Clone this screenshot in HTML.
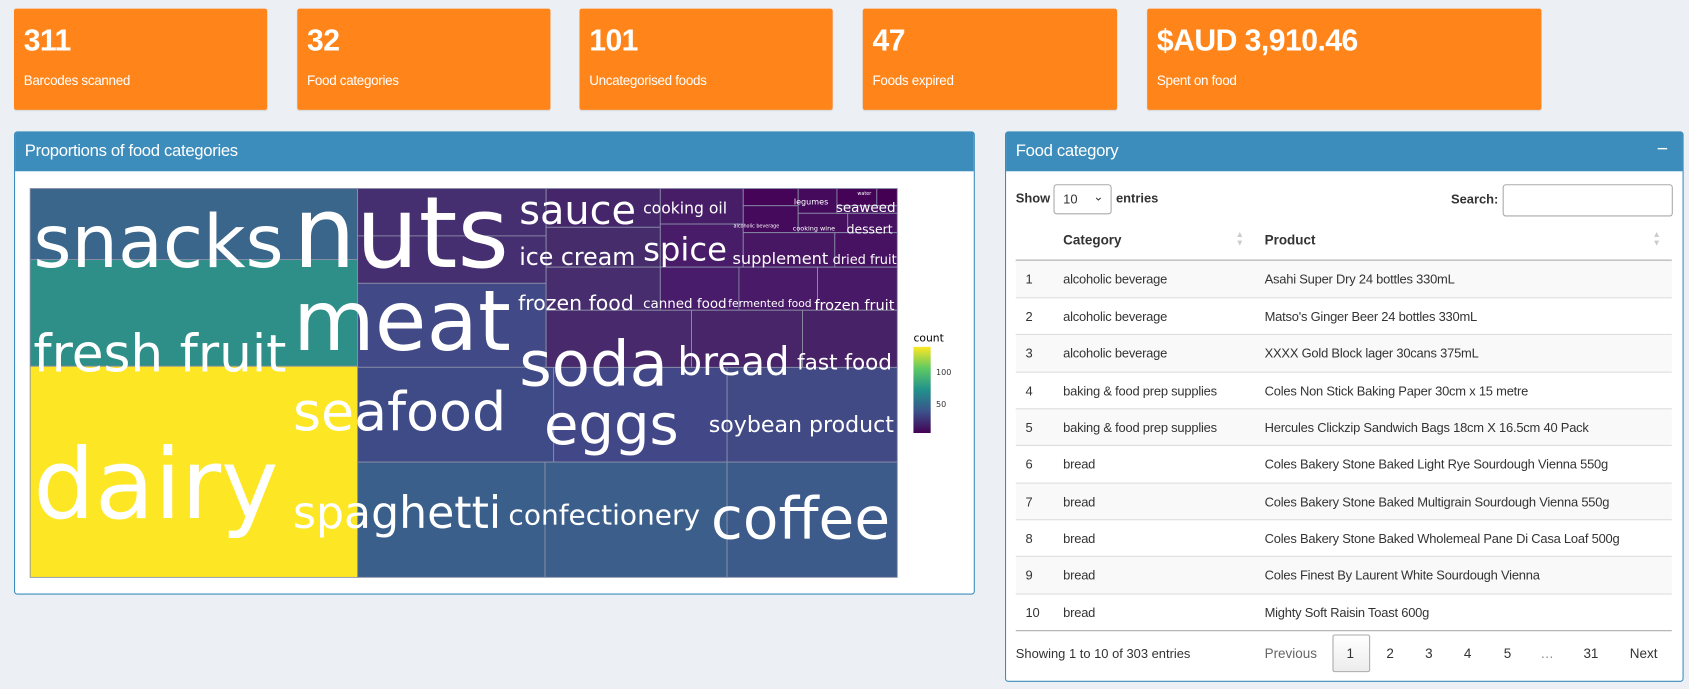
<!DOCTYPE html>
<html><head><meta charset="utf-8">
<style>
html,body{margin:0;padding:0;background:#ecf0f5;width:1689px;height:689px;overflow:hidden}
#w{position:absolute;left:0;top:0;width:1568px;height:640px;transform:scale(1.07717);transform-origin:0 0;font-family:"Liberation Sans",sans-serif;color:#333}
.a{position:absolute}
.vb{position:absolute;top:8px;height:94px;background:#ff851b;color:#fff;border-radius:2px;box-shadow:0 1px 1px rgba(0,0,0,.1)}
.vb b{position:absolute;left:9px;top:14px;font-size:28px;font-weight:bold;letter-spacing:-0.5px}
.vb span{position:absolute;left:9px;top:60px;font-size:12.5px;letter-spacing:-0.3px}
.box{position:absolute;background:#fff;border:1px solid #3c8dbc;border-radius:3px}
.hd{position:absolute;left:0;top:0;right:0;height:36px;background:#3c8dbc;color:#fff;font-size:15.5px;letter-spacing:-0.3px}
.hd span{position:absolute;left:9px;top:9px}
.row{position:absolute;left:943px;width:609px;height:34px;border-top:1px solid #ddd;font-size:12px;letter-spacing:-0.2px}
.row span{position:absolute;top:10px}
.pg{position:absolute;top:600px;font-size:12.5px;color:#333}
</style></head><body><div id="w">
<div class="vb" style="left:13px;width:235px"><b>311</b><span>Barcodes scanned</span></div>
<div class="vb" style="left:276px;width:235px"><b>32</b><span>Food categories</span></div>
<div class="vb" style="left:538px;width:235px"><b>101</b><span>Uncategorised foods</span></div>
<div class="vb" style="left:801px;width:236px"><b>47</b><span>Foods expired</span></div>
<div class="vb" style="left:1065px;width:366px"><b>$AUD 3,910.46</b><span>Spent on food</span></div>

<div class="box" style="left:13px;top:122px;width:890px;height:428px"><div class="hd"><span>Proportions of food categories</span></div></div>

<svg class="a" style="left:0;top:0" width="1568" height="640" viewBox="0 0 1568 640" font-family="DejaVu Sans, sans-serif" fill="#fff">
<g stroke="#8a8fa8" stroke-width="0.8">
<rect x="28" y="175" width="304" height="66" fill="#3a668b"/>
<rect x="28" y="241" width="304" height="99" fill="#2e8f89"/>
<rect x="28" y="340" width="304" height="196" fill="#fde724"/>
<rect x="332" y="175" width="175" height="44" fill="#462f70"/>
<rect x="332" y="219" width="175" height="44" fill="#462f70"/>
<rect x="332" y="263" width="175" height="78" fill="#414a86"/>
<rect x="332" y="341" width="182" height="88" fill="#3f4b87"/>
<rect x="514" y="341" width="161" height="88" fill="#424787"/>
<rect x="675" y="341" width="158" height="88" fill="#424a86"/>
<rect x="332" y="429" width="174" height="107" fill="#3b5f8b"/>
<rect x="506" y="429" width="169" height="107" fill="#3b5e8b"/>
<rect x="675" y="429" width="158" height="107" fill="#3c5a8a"/>
<rect x="507" y="175" width="106" height="36" fill="#46266b"/>
<rect x="507" y="211" width="106" height="37" fill="#472c6c"/>
<rect x="507" y="248" width="106" height="40" fill="#472d6d"/>
<rect x="613" y="175" width="77" height="33" fill="#471d67"/>
<rect x="613" y="208" width="77" height="40" fill="#481c68"/>
<rect x="690" y="175" width="51" height="16" fill="#450457"/>
<rect x="690" y="191" width="51" height="25" fill="#450a5c"/>
<rect x="741" y="175" width="36" height="23" fill="#450a5c"/>
<rect x="741" y="198" width="46" height="18" fill="#46105f"/>
<rect x="777" y="175" width="37" height="16" fill="#440356"/>
<rect x="814" y="175" width="19" height="16" fill="#440154"/>
<rect x="777" y="191" width="56" height="7" fill="#46105f"/>
<rect x="787" y="198" width="46" height="18" fill="#461261"/>
<rect x="690" y="216" width="85" height="32" fill="#471763"/>
<rect x="775" y="216" width="58" height="32" fill="#461261"/>
<rect x="613" y="248" width="73" height="40" fill="#481c6a"/>
<rect x="686" y="248" width="73" height="40" fill="#481a68"/>
<rect x="759" y="248" width="74" height="40" fill="#481966"/>
<rect x="507" y="288" width="135" height="53" fill="#482a6c"/>
<rect x="642" y="288" width="103" height="53" fill="#482568"/>
<rect x="745" y="288" width="88" height="53" fill="#482266"/>
</g>
<text x="31" y="248" font-size="68">snacks</text>
<text x="272" y="248" font-size="92">nuts</text>
<text x="31" y="345" font-size="48">fresh fruit</text>
<text x="272" y="325" font-size="78">meat</text>
<text x="31" y="481" font-size="90">dairy</text>
<text x="272" y="399" font-size="50">seafood</text>
<text x="272" y="490" font-size="41">spaghetti</text>
<text x="472" y="487" font-size="26">confectionery</text>
<text x="660" y="500" font-size="54">coffee</text>
<text x="482" y="358" font-size="58">soda</text>
<text x="505" y="412" font-size="52">eggs</text>
<text x="629" y="348" font-size="36">bread</text>
<text x="740" y="343" font-size="20">fast food</text>
<text x="658" y="401" font-size="20.5">soybean product</text>
<text x="482" y="208" font-size="37">sauce</text>
<text x="482" y="246" font-size="22">ice cream</text>
<text x="597" y="242" font-size="30">spice</text>
<text x="597" y="198" font-size="14.5">cooking oil</text>
<text x="680" y="245" font-size="15">supplement</text>
<text x="773" y="245" font-size="12">dried fruit</text>
<text x="481" y="288" font-size="19">frozen food</text>
<text x="597" y="286" font-size="12.5">canned food</text>
<text x="676" y="285" font-size="10">fermented food</text>
<text x="756" y="288" font-size="13.5">frozen fruit</text>
<text x="776" y="197" font-size="12.5">seaweed</text>
<text x="786" y="217" font-size="11.5">dessert</text>
<text x="737" y="190" font-size="7.5">legumes</text>
<text x="736" y="214" font-size="6">cooking wine</text>
<text x="681" y="211" font-size="4.5">alcoholic beverage</text>
<text x="796" y="181" font-size="4.5">water</text>
<defs><linearGradient id="g" x1="0" y1="0" x2="0" y2="1"><stop offset="0" stop-color="#fde725"/><stop offset=".25" stop-color="#5ec962"/><stop offset=".5" stop-color="#21918c"/><stop offset=".75" stop-color="#3b528b"/><stop offset="1" stop-color="#440154"/></linearGradient></defs>
<text x="848" y="317" font-size="10" fill="#000">count</text>
<rect x="848" y="322" width="16" height="80" fill="url(#g)"/>
<text x="869" y="348" font-size="7.5" fill="#333">100</text>
<text x="869" y="378" font-size="7.5" fill="#333">50</text>
</svg>

<div class="box" style="left:933px;top:122px;width:628px;height:509px"><div class="hd"><span>Food category</span><span style="left:604px;top:5px;font-size:18px">−</span></div></div>
<div class="a" style="left:943px;top:177px;font-size:12px;font-weight:bold">Show</div>
<div class="a" style="left:978px;top:171px;width:52px;height:26px;border:1px solid #aaa;border-radius:3px;background:#fff;font-size:12px"><span class="a" style="left:8px;top:6px">10</span><span class="a" style="left:36px;top:4px;font-size:11px">&#8964;</span></div>
<div class="a" style="left:1036px;top:177px;font-size:12px;font-weight:bold">entries</div>
<div class="a" style="left:1347px;top:178px;font-size:12px;font-weight:bold">Search:</div>
<div class="a" style="left:1395px;top:171px;width:156px;height:28px;border:1px solid #aaa;border-radius:3px;background:#fff"></div>
<div class="a" style="left:987px;top:216px;font-size:12.5px;font-weight:bold">Category</div>
<div class="a" style="left:1174px;top:216px;font-size:12.5px;font-weight:bold">Product</div>
<div class="a" style="left:1147px;top:214px;font-size:8px;color:#ccc;line-height:8px">▲<br>▼</div>
<div class="a" style="left:1534px;top:214px;font-size:8px;color:#ccc;line-height:8px">▲<br>▼</div>
<div class="a" style="left:943px;top:241px;width:609px;border-top:2px solid #aaa"></div>
<div class="row" style="top:242px;background:#f9f9f9;border-top:none"><span style="left:9px">1</span><span style="left:44px">alcoholic beverage</span><span style="left:231px">Asahi Super Dry 24 bottles 330mL</span></div>
<div class="row" style="top:276px"><span style="left:9px">2</span><span style="left:44px">alcoholic beverage</span><span style="left:231px">Matso's Ginger Beer 24 bottles 330mL</span></div>
<div class="row" style="top:310px;background:#f9f9f9"><span style="left:9px">3</span><span style="left:44px">alcoholic beverage</span><span style="left:231px">XXXX Gold Block lager 30cans 375mL</span></div>
<div class="row" style="top:345px"><span style="left:9px">4</span><span style="left:44px">baking &amp; food prep supplies</span><span style="left:231px">Coles Non Stick Baking Paper 30cm x 15 metre</span></div>
<div class="row" style="top:379px;background:#f9f9f9"><span style="left:9px">5</span><span style="left:44px">baking &amp; food prep supplies</span><span style="left:231px">Hercules Clickzip Sandwich Bags 18cm X 16.5cm 40 Pack</span></div>
<div class="row" style="top:413px"><span style="left:9px">6</span><span style="left:44px">bread</span><span style="left:231px">Coles Bakery Stone Baked Light Rye Sourdough Vienna 550g</span></div>
<div class="row" style="top:448px;background:#f9f9f9"><span style="left:9px">7</span><span style="left:44px">bread</span><span style="left:231px">Coles Bakery Stone Baked Multigrain Sourdough Vienna 550g</span></div>
<div class="row" style="top:482px"><span style="left:9px">8</span><span style="left:44px">bread</span><span style="left:231px">Coles Bakery Stone Baked Wholemeal Pane Di Casa Loaf 500g</span></div>
<div class="row" style="top:516px;background:#f9f9f9"><span style="left:9px">9</span><span style="left:44px">bread</span><span style="left:231px">Coles Finest By Laurent White Sourdough Vienna</span></div>
<div class="row" style="top:551px"><span style="left:9px">10</span><span style="left:44px">bread</span><span style="left:231px">Mighty Soft Raisin Toast 600g</span></div>
<div class="a" style="left:943px;top:585px;width:609px;border-top:1px solid #aaa"></div>
<div class="pg" style="left:943px;font-size:12px">Showing 1 to 10 of 303 entries</div>
<div class="pg" style="left:1174px;color:#666">Previous</div>
<div class="a" style="left:1237px;top:589px;width:33px;height:33px;border:1px solid #aaa;border-radius:2px;background:linear-gradient(#fff,#ececec)"></div>
<div class="pg" style="left:1250px">1</div>
<div class="pg" style="left:1287px">2</div>
<div class="pg" style="left:1323px">3</div>
<div class="pg" style="left:1359px">4</div>
<div class="pg" style="left:1396px">5</div>
<div class="pg" style="left:1430px;color:#888">…</div>
<div class="pg" style="left:1470px">31</div>
<div class="pg" style="left:1513px">Next</div>
</div></body></html>
